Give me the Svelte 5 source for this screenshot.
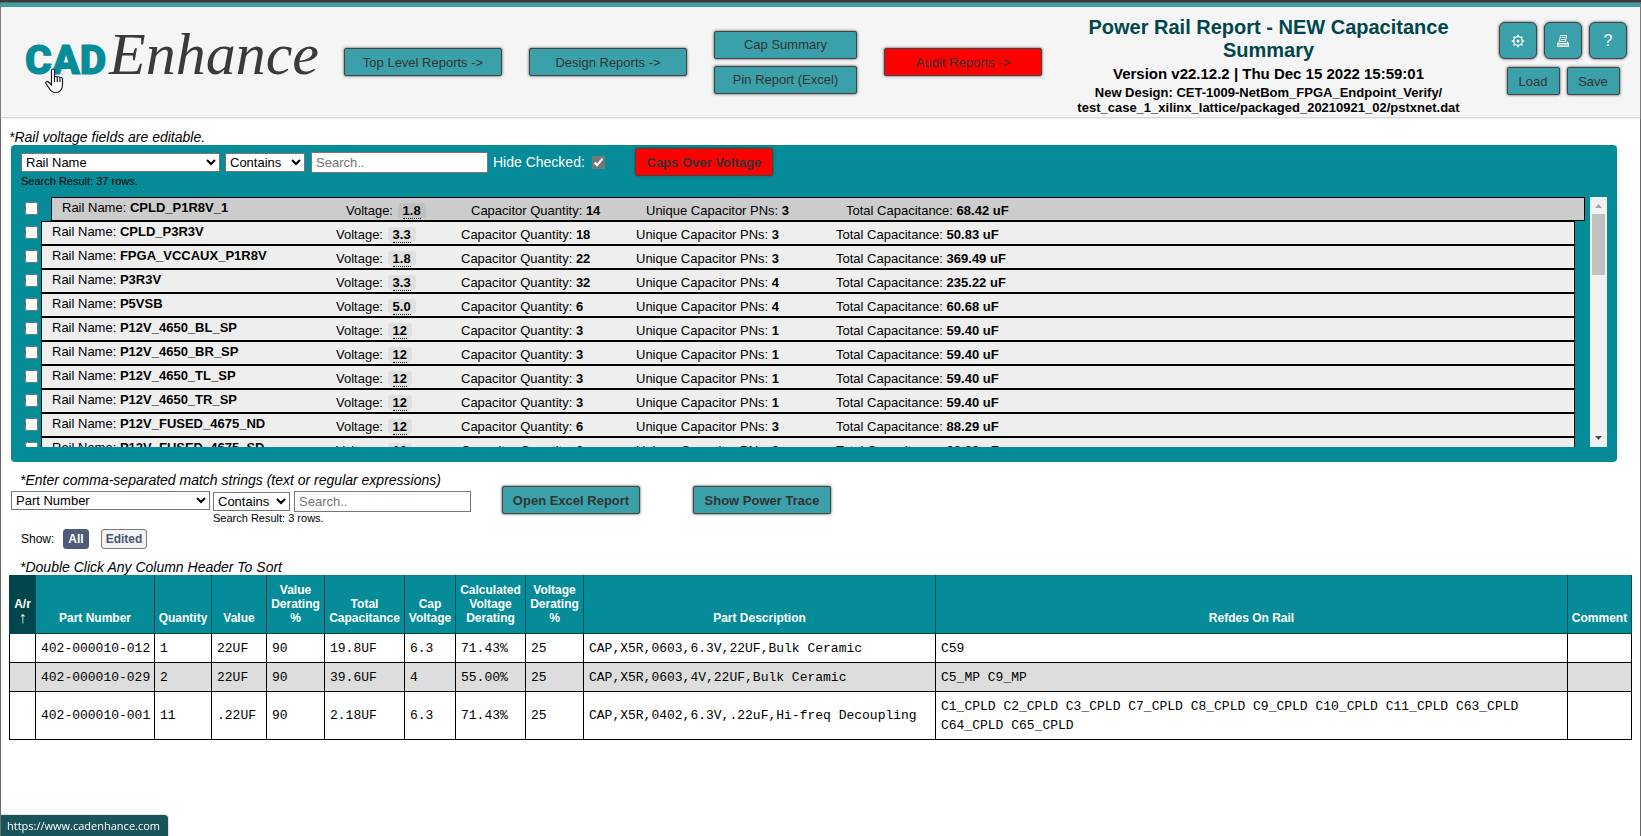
<script lang="ts">
	type Rail = { name: string; voltage: string; qty: number; pns: number; total: string };

	const rails: Rail[] = [
		{ name: 'CPLD_P1R8V_1', voltage: '1.8', qty: 14, pns: 3, total: '68.42 uF' },
		{ name: 'CPLD_P3R3V', voltage: '3.3', qty: 18, pns: 3, total: '50.83 uF' },
		{ name: 'FPGA_VCCAUX_P1R8V', voltage: '1.8', qty: 22, pns: 3, total: '369.49 uF' },
		{ name: 'P3R3V', voltage: '3.3', qty: 32, pns: 4, total: '235.22 uF' },
		{ name: 'P5VSB', voltage: '5.0', qty: 6, pns: 4, total: '60.68 uF' },
		{ name: 'P12V_4650_BL_SP', voltage: '12', qty: 3, pns: 1, total: '59.40 uF' },
		{ name: 'P12V_4650_BR_SP', voltage: '12', qty: 3, pns: 1, total: '59.40 uF' },
		{ name: 'P12V_4650_TL_SP', voltage: '12', qty: 3, pns: 1, total: '59.40 uF' },
		{ name: 'P12V_4650_TR_SP', voltage: '12', qty: 3, pns: 1, total: '59.40 uF' },
		{ name: 'P12V_FUSED_4675_ND', voltage: '12', qty: 6, pns: 3, total: '88.29 uF' },
		{ name: 'P12V_FUSED_4675_SD', voltage: '12', qty: 6, pns: 3, total: '88.29 uF' }
	];

	const columns = [
		{ label: 'A/r', cls: 'ar', sorted: true },
		{ label: 'Part Number', cls: 'part' },
		{ label: 'Quantity', cls: 'qty' },
		{ label: 'Value', cls: 'value' },
		{ label: 'Value Derating %', cls: 'derate' },
		{ label: 'Total Capacitance', cls: 'total' },
		{ label: 'Cap Voltage', cls: 'cap' },
		{ label: 'Calculated Voltage Derating', cls: 'calc' },
		{ label: 'Voltage Derating %', cls: 'derate' },
		{ label: 'Part Description', cls: 'desc' },
		{ label: 'Refdes On Rail', cls: 'refdes' },
		{ label: 'Comment', cls: 'comment' }
	];

	const parts = [
		['', '402-000010-012', '1', '22UF', '90', '19.8UF', '6.3', '71.43%', '25', 'CAP,X5R,0603,6.3V,22UF,Bulk Ceramic', 'C59', ''],
		['', '402-000010-029', '2', '22UF', '90', '39.6UF', '4', '55.00%', '25', 'CAP,X5R,0603,4V,22UF,Bulk Ceramic', 'C5_MP C9_MP', ''],
		[
			'', '402-000010-001', '11', '.22UF', '90', '2.18UF', '6.3', '71.43%', '25',
			'CAP,X5R,0402,6.3V,.22uF,Hi-freq Decoupling',
			'C1_CPLD C2_CPLD C3_CPLD C7_CPLD C8_CPLD C9_CPLD C10_CPLD C11_CPLD C63_CPLD C64_CPLD C65_CPLD',
			''
		]
	];

	let selected = $state(0);
	let hideChecked = $state(true);
	let show = $state('All');
</script>

<div class="page">
	<header>
		<a class="logo" href="https://www.cadenhance.com" aria-label="CADEnhance">
			<span class="cad">CAD</span><span class="enhance">Enhance</span>
			<svg class="pointer" width="19" height="26" viewBox="0 0 19 26">
				<path
					d="M6.5 2.5c0-2 3-2 3 0v7c0-1.600 2.600-1.600 2.800.3 0-1.500 2.600-1.400 2.700.5.2-1.300 2.500-1 2.500.8v6c0 4-2.500 7.400-7 7.400-4 0-5.500-2.500-6.500-4.500L1 15.500c-.8-1.700 1-2.700 2.400-1.500l3.100 3z"
					fill="#fff"
					stroke="#1c1c2c"
					stroke-width="1.200"
				/>
				<path d="M9.500 9v5M12.300 9.500v4.500M15 10.500v3.500" stroke="#1c1c2c" stroke-width="1.200" />
			</svg>
		</a>
		<nav>
			<button class="btn wide">Top Level Reports -&gt;</button>
			<button class="btn wide">Design Reports -&gt;</button>
			<div class="stack">
				<button class="btn">Cap Summary</button>
				<button class="btn">Pin Report (Excel)</button>
			</div>
			<button class="btn wide red">Audit Reports -&gt;</button>
		</nav>
		<div class="titles">
			<h1>Power Rail Report - NEW Capacitance Summary</h1>
			<p class="version">Version v22.12.2 | Thu Dec 15 2022 15:59:01</p>
			<p class="design">New Design: CET-1009-NetBom_FPGA_Endpoint_Verify/<br />test_case_1_xilinx_lattice/packaged_20210921_02/pstxnet.dat</p>
		</div>
		<div class="tools">
			<div class="tool-row">
				<button class="btn icon" aria-label="Settings">
					<svg width="14" height="14" viewBox="0 0 14 14" fill="none" stroke="#fff">
						<circle cx="7" cy="7" r="4.300" stroke-width="1.300" />
						<circle cx="7" cy="7" r="1.500" fill="#fff" stroke="none" />
						<path
							d="M7 .8v2M7 11.200v2M.8 7h2M11.200 7h2M2.600 2.600l1.400 1.400M10 10l1.400 1.400M2.600 11.400L4 10M10 4l1.400-1.400"
							stroke-width="1.600"
						/>
					</svg>
				</button>
				<button class="btn icon" aria-label="Print">
					<svg width="14" height="14" viewBox="0 0 14 14" fill="none" stroke="#fff">
						<path d="M4.500 1.500h6l-1 6h-6zM5.500 3.500h3.500M5.200 5.500h3.500" />
						<path d="M3 7.500L1.500 9.500h11L11 7.500M1.500 9.500v3h11v-3M2 11h10" />
					</svg>
				</button>
				<button class="btn icon">?</button>
			</div>
			<div class="tool-row">
				<button class="btn small">Load</button>
				<button class="btn small">Save</button>
			</div>
		</div>
	</header>

	<main>
		<p class="note">*Rail voltage fields are editable.</p>
		<section class="panel">
			<div class="filters">
				<select class="field-select" aria-label="Rail field">
					<option>Rail Name</option>
				</select>
				<select class="match-select" aria-label="Rail match">
					<option>Contains</option>
				</select>
				<input class="search" type="text" placeholder="Search.." aria-label="Search rails" />
				<label class="hide">Hide Checked: <input type="checkbox" class="grey" bind:checked={hideChecked} /></label>
				<button class="btn bold red caps">Caps Over Voltage</button>
			</div>
			<p class="result">Search Result: 37 rows.</p>
			<div class="list">
				<div class="rails">
					{#each rails as rail, i}
						<div class="rail-line">
							<input type="checkbox" aria-label={rail.name} />
							<!-- svelte-ignore a11y_click_events_have_key_events, a11y_no_static_element_interactions -->
							<div class="rail" class:selected={selected === i} onclick={() => (selected = i)}>
								<span class="name">Rail Name: <b>{rail.name}</b></span>
								<span>Voltage: <b class="volt"><u>{rail.voltage}</u></b></span>
								<span>Capacitor Quantity: <b>{rail.qty}</b></span>
								<span>Unique Capacitor PNs: <b>{rail.pns}</b></span>
								<span>Total Capacitance: <b>{rail.total}</b></span>
							</div>
						</div>
					{/each}
				</div>
				<div class="scrollbar">
					<svg width="17" height="17" viewBox="0 0 17 17"><path d="M5 11h7L8.500 7z" fill="#a3a3a3" /></svg>
					<div class="thumb"></div>
					<svg class="down" width="17" height="17" viewBox="0 0 17 17"><path d="M5 6h7L8.500 10z" fill="#505050" /></svg>
				</div>
			</div>
		</section>

		<p class="note inset">*Enter comma-separated match strings (text or regular expressions)</p>
		<div class="part-filters">
			<select class="field-select" aria-label="Part field">
				<option>Part Number</option>
			</select>
			<div class="match">
				<select class="match-select" aria-label="Part match">
					<option>Contains</option>
				</select>
				<p class="result">Search Result: 3 rows.</p>
			</div>
			<input class="search" type="text" placeholder="Search.." aria-label="Search parts" />
			<div class="actions">
				<button class="btn bold">Open Excel Report</button>
				<button class="btn bold">Show Power Trace</button>
			</div>
		</div>
		<div class="show">
			<span>Show:</span>
			{#each ['All', 'Edited'] as option}
				<button class="toggle" class:active={show === option} onclick={() => (show = option)}>{option}</button>
			{/each}
		</div>

		<p class="note inset">*Double Click Any Column Header To Sort</p>
		<table>
			<thead>
				<tr>
					{#each columns as col}
						<th class={col.cls}>{col.label}{#if col.sorted} <span class="arrow">↑</span>{/if}</th>
					{/each}
				</tr>
			</thead>
			<tbody>
				{#each parts as row}
					<tr>
						{#each row as cell, i}
							<td class:wrap={columns[i].cls === 'refdes'}>{cell}</td>
						{/each}
					</tr>
				{/each}
			</tbody>
		</table>
	</main>

	<div class="status">https://www.cadenhance.com</div>
</div>

<style>
	:global(body) {
		background: #fff;
	}
	.page {
		box-sizing: border-box;
		min-height: 100vh;
		border-top: 2px solid #3a3a3a;
		box-shadow: inset 1px 1px #666, inset -1px 0 #666;
		padding: 1px 1px 0;
		font-family: 'Liberation Sans', Arial, sans-serif;
		font-size: 13px;
		color: #000;
	}
	.page * {
		box-sizing: border-box;
	}
	p,
	h1 {
		margin: 0;
	}
	button,
	select,
	input {
		font-family: inherit;
		font-size: 13px;
		margin: 0;
	}

	header {
		display: flex;
		align-items: center;
		height: 115px;
		padding-right: 13px;
		border-top: 4px solid #3aa1aa;
		border-bottom: 1px solid #d8d8d8;
		background: #f5f5f5;
		box-shadow: 0 1px 1px #eee;
	}
	.logo {
		position: relative;
		display: flex;
		align-items: baseline;
		flex: none;
		width: 320px;
		margin-bottom: 10px;
		padding-left: 24px;
		text-decoration: none;
		line-height: 72px;
	}
	.cad {
		width: 84px;
		color: #058c98;
		font-family: Roboto, sans-serif;
		font-size: 41px;
		font-weight: 900;
		-webkit-text-stroke: 1px #058c98;
	}
	.enhance {
		color: #3a3a3a;
		font-family: 'Liberation Serif', serif;
		font-size: 60px;
		font-style: italic;
	}
	.pointer {
		position: absolute;
		left: 44px;
		top: 50px;
	}
	nav {
		display: flex;
		align-items: center;
		gap: 27px;
		margin-left: 23px;
	}
	.btn {
		height: 28px;
		padding: 0;
		border: 1px solid #444;
		border-radius: 2px;
		background: #3aa1aa;
		box-shadow: 0 0 3px #444;
		color: #333;
		white-space: nowrap;
	}
	.btn.red {
		background: #f00;
	}
	.btn.bold {
		width: 138px;
		font-weight: bold;
	}
	.wide {
		width: 158px;
	}
	.stack {
		display: flex;
		flex-direction: column;
		gap: 7px;
		width: 143px;
	}
	.titles {
		flex: 1;
		padding: 6px 6px 0 2px;
		text-align: center;
		font-weight: bold;
	}
	h1 {
		color: #01464c;
		font-size: 20px;
		line-height: 23px;
	}
	.version {
		font-size: 15px;
		line-height: 23px;
	}
	.design {
		line-height: 15px;
	}
	.tools {
		display: flex;
		flex-direction: column;
		align-items: center;
		gap: 8px;
		margin-bottom: 7px;
	}
	.tool-row {
		display: flex;
		gap: 7px;
	}
	.btn.icon {
		display: flex;
		align-items: center;
		justify-content: center;
		width: 38px;
		height: 37px;
		border-radius: 6px;
		color: #fff;
		font-size: 16px;
	}
	.small {
		width: 53px;
	}

	main {
		padding: 11px 8px 0;
	}
	.note {
		font-size: 14px;
		font-style: italic;
		line-height: 16px;
	}
	.note.inset {
		padding-left: 11px;
	}
	.panel {
		height: 317px;
		margin: 0 15px 10px 2px;
		padding: 4px 10px 0;
		border-radius: 4px;
		background: #058c98;
	}
	.filters {
		display: flex;
		align-items: center;
		height: 26px;
	}
	select {
		height: 19px;
		padding: 0;
		border: 1px solid #767676;
		border-radius: 0;
		background-color: #fff;
		color: #000;
	}
	.field-select {
		width: 199px;
	}
	.match-select {
		width: 80px;
		margin-left: 5px;
	}
	.search {
		width: 177px;
		height: 21px;
		margin-left: 6px;
		padding: 0 4px;
		border: 1px solid #767676;
	}
	.search::placeholder {
		color: #757575;
	}
	.hide {
		display: flex;
		align-items: center;
		gap: 7px;
		margin-left: 5px;
		color: #fff;
		font-size: 14px;
	}
	input[type='checkbox'] {
		width: 13px;
		height: 13px;
	}
	.grey {
		accent-color: #767676;
	}
	.btn.caps {
		margin-left: 30px;
	}
	.result {
		font-size: 11px;
		line-height: 13px;
	}
	.list {
		display: flex;
		height: 250px;
		margin-top: 9px;
		overflow: hidden;
	}
	.rails {
		flex: 1;
	}
	.rail-line {
		display: flex;
		align-items: flex-start;
		height: 24px;
		padding: 0 15px 0 4px;
	}
	.rail-line input {
		flex: none;
		margin: 5px 3px 0 0;
	}
	.rail {
		flex: 1;
		display: grid;
		grid-template-columns: 284px 125px 175px 200px 1fr;
		height: 24px;
		padding: 4px 0 0 10px;
		border: 1px solid #000;
		background: #eee;
		line-height: 17px;
		white-space: nowrap;
	}
	.rail.selected {
		margin: 0 -10px 0 10px;
		background: #ccc;
	}
	.name {
		margin-top: -3px;
	}
	.volt {
		margin-left: 1px;
		padding: 0 5px;
		border-radius: 3px;
		background: rgba(0, 0, 0, 0.06);
	}
	.volt u {
		border-bottom: 1px dotted #000;
		text-decoration: none;
	}
	.scrollbar {
		display: flex;
		flex-direction: column;
		width: 17px;
		background: #f1f1f1;
	}
	.thumb {
		height: 61px;
		margin: 0 2px;
		background: #c1c1c1;
	}
	.down {
		margin-top: auto;
	}

	.part-filters {
		display: flex;
		align-items: flex-start;
		height: 35px;
		margin: 3px 0 0 2px;
	}
	.part-filters .match {
		width: 81px;
		padding: 1px 0 0 3px;
	}
	.match .match-select {
		display: block;
		width: 77px;
		margin-left: 0;
	}
	.match .result {
		margin-top: 1px;
		white-space: nowrap;
	}
	.part-filters .search {
		margin-left: 3px;
	}
	.actions {
		display: flex;
		gap: 53px;
		margin: -5px 0 0 31px;
	}
	.show {
		display: flex;
		align-items: center;
		height: 20px;
		margin: 3px 0 10px 12px;
		font-size: 12px;
	}
	.toggle {
		height: 20px;
		margin-left: 9px;
		padding: 0 4px;
		border: 1px solid #777;
		border-radius: 3px;
		background: #f3f3f6;
		color: #4a5672;
		font-size: 12px;
		font-weight: bold;
	}
	.toggle + .toggle {
		margin-left: 12px;
	}
	.toggle.active {
		border-color: #4f5b78;
		background: #4f5b78;
		color: #fff;
	}

	table {
		width: 100%;
		border-collapse: collapse;
		table-layout: fixed;
	}
	th {
		height: 58px;
		padding: 6px 0 8px;
		border: 1px solid #01464c;
		border-top: 0;
		background: #058c98;
		color: #fff;
		font-size: 12px;
		line-height: 14px;
		vertical-align: bottom;
	}
	th:first-child {
		background: #01464c;
	}
	.arrow {
		display: block;
		font-size: 16px;
	}
	td {
		padding: 5px 4px 4px 5px;
		border: 1px solid #000;
		font-family: 'Liberation Mono', monospace;
		line-height: 19px;
		white-space: nowrap;
	}
	td.wrap {
		white-space: normal;
	}
	tbody tr:nth-child(even) {
		background: #ddd;
	}
	.ar {
		width: 26px;
	}
	.part {
		width: 119px;
	}
	.qty {
		width: 57px;
	}
	.value {
		width: 55px;
	}
	.derate {
		width: 58px;
	}
	.total {
		width: 80px;
	}
	.cap {
		width: 51px;
	}
	.calc {
		width: 70px;
	}
	.desc {
		width: 352px;
	}
	.comment {
		width: 64px;
	}

	.status {
		position: fixed;
		left: 1px;
		bottom: 0;
		height: 21px;
		padding: 0 8px 0 6px;
		border-radius: 0 4px 0 0;
		background: #1b535a;
		box-shadow: 0 0 2px #888;
		color: #fff;
		font-family: 'Open Sans', sans-serif;
		font-size: 11px;
		line-height: 21px;
	}
</style>
